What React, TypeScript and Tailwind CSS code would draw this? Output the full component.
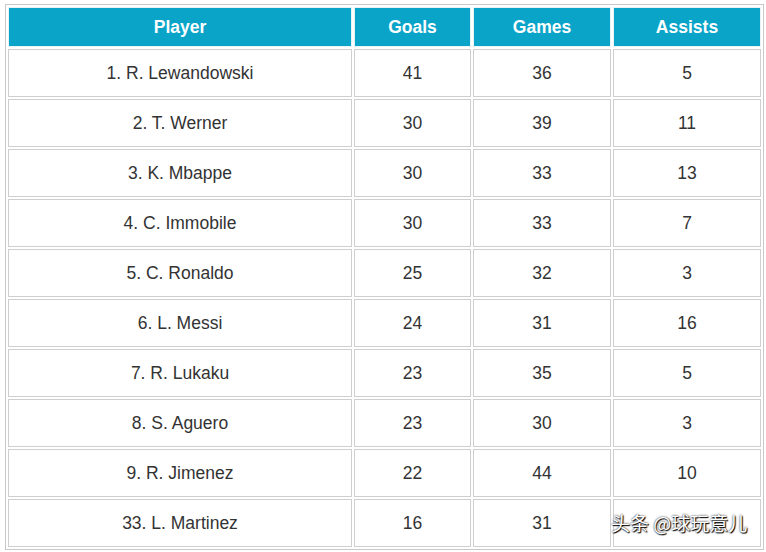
const rows: [string, number, number, number | null][] = [
  ["1. R. Lewandowski", 41, 36, 5],
  ["2. T. Werner", 30, 39, 11],
  ["3. K. Mbappe", 30, 33, 13],
  ["4. C. Immobile", 30, 33, 7],
  ["5. C. Ronaldo", 25, 32, 3],
  ["6. L. Messi", 24, 31, 16],
  ["7. R. Lukaku", 23, 35, 5],
  ["8. S. Aguero", 23, 30, 3],
  ["9. R. Jimenez", 22, 44, 10],
  ["33. L. Martinez", 16, 31, null],
];

export default function App() {
  return (
    <div className="relative w-[766px] h-[552px] bg-white pl-[5px] pt-[4px] font-['Liberation_Sans',Arial,sans-serif] text-[17.5px] text-[#333]">
      <table className="w-[759px] border-separate border-spacing-[2px] border border-[#c8c8c8]">
        <thead>
          <tr>
            <th className="w-[344px] h-[40px] bg-[#0aa4c9] border border-[#e6f4f8] text-white font-bold">Player</th>
            <th className="w-[117px] bg-[#0aa4c9] border border-[#e6f4f8] text-white font-bold">Goals</th>
            <th className="w-[138px] bg-[#0aa4c9] border border-[#e6f4f8] text-white font-bold">Games</th>
            <th className="bg-[#0aa4c9] border border-[#e6f4f8] text-white font-bold">Assists</th>
          </tr>
        </thead>
        <tbody>
          {rows.map(([name, goals, games, assists]) => (
            <tr key={name}>
              <td className="h-[48px] border border-[#cfcfcf] text-center">{name}</td>
              <td className="border border-[#cfcfcf] text-center">{goals}</td>
              <td className="border border-[#cfcfcf] text-center">{games}</td>
              <td className="border border-[#cfcfcf] text-center">{assists}</td>
            </tr>
          ))}
        </tbody>
      </table>

      {/* watermark */}
      <div className="absolute left-[611px] top-[509px] text-[19px] text-white font-['Noto_Sans_CJK_SC',sans-serif] [text-shadow:0_0_2px_#000,1px_1px_1px_#000]">
        头条 @球玩意儿
      </div>
    </div>
  );
}
